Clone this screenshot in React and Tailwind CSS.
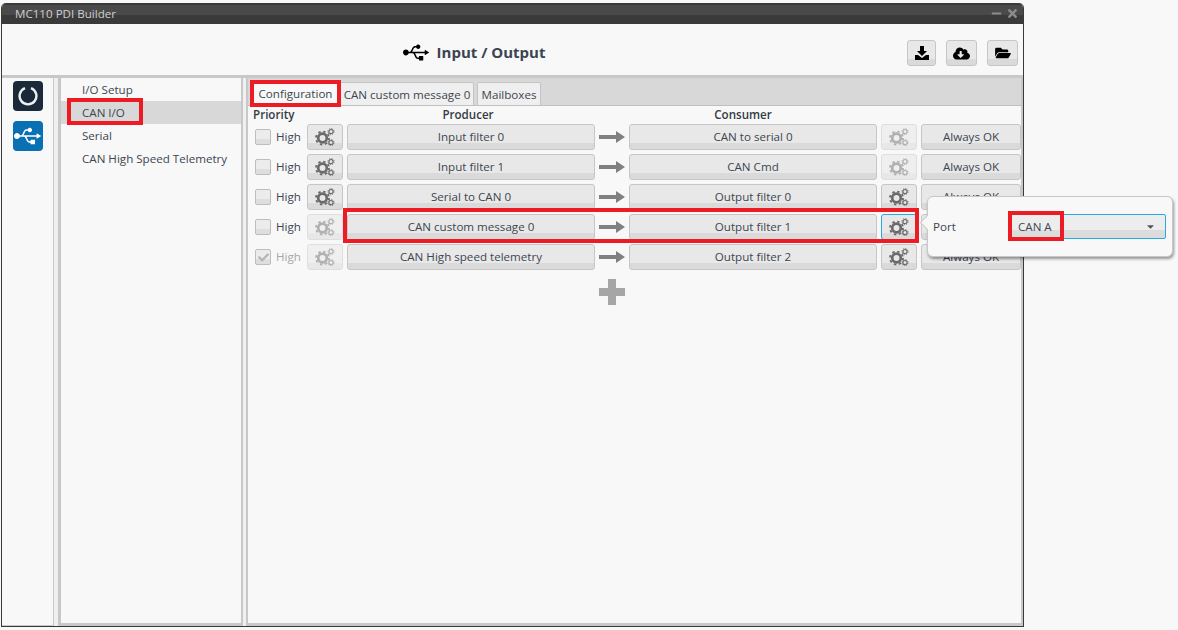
import { FaUsb, FaCloudDownloadAlt, FaFolderOpen, FaTimes, FaMinus, FaCheck, FaCaretDown } from 'react-icons/fa';

const rows = [
  { producer: 'Input filter 0', consumer: 'CAN to serial 0', prodGear: true, consGear: false },
  { producer: 'Input filter 1', consumer: 'CAN Cmd', prodGear: true, consGear: false },
  { producer: 'Serial to CAN 0', consumer: 'Output filter 0', prodGear: true, consGear: true },
  { producer: 'CAN custom message 0', consumer: 'Output filter 1', prodGear: false, consGear: true, focus: true },
  { producer: 'CAN High speed telemetry', consumer: 'Output filter 2', prodGear: false, consGear: true, checked: true },
];

const face = 'flex items-center justify-center h-[26px] rounded-[3px] border bg-[linear-gradient(#e8e8e8_76%,#dadada_76%)] text-[#3c4650]';
const btn = `${face} border-[#c6c6c6]`;

function Gears({ className }) {
  return (
    <svg className={className} viewBox="0 0 20 18" fill="none" stroke="currentColor">
      <circle cx="7.5" cy="10" r="4.3" strokeWidth="2.7" />
      <circle cx="7.5" cy="10" r="6.5" strokeWidth="1.8" strokeDasharray="2.4 2.7" />
      <circle cx="16" cy="3.6" r="2.1" strokeWidth="1.2" />
      <circle cx="16" cy="3.6" r="3.1" strokeWidth="0.9" strokeDasharray="1.2 1.23" />
      <circle cx="16" cy="14.6" r="2.1" strokeWidth="1.2" />
      <circle cx="16" cy="14.6" r="3.1" strokeWidth="0.9" strokeDasharray="1.2 1.23" />
    </svg>
  );
}

function GearButton({ on, focus }) {
  return (
    <div className={`${face} w-[36px] ${focus ? 'border-[#29a9df]' : 'border-[#c6c6c6]'} ${on ? '' : 'opacity-50'}`}>
      <Gears className="w-[20px] h-[18px] text-[#6a6a6a]" />
    </div>
  );
}

function Arrow() {
  return (
    <svg className="w-[26px] h-[12px] mx-[4px] shrink-0" viewBox="0 0 26 12">
      <path d="M0 4h17V0l9 6-9 6V8H0z" fill="#808080" />
    </svg>
  );
}

function Row({ row }) {
  return (
    <div className="flex items-center h-[26px] mb-[4px]">
      <div className="w-[16px] h-[16px] ml-[7px] rounded-[2px] border border-[#bdbdbd] bg-[linear-gradient(#ececec_65%,#dedede_65%)] flex items-center justify-center">
        {row.checked && <FaCheck className="w-[11px] h-[11px] text-[#b4b4b4]" />}
      </div>
      <span className={`w-[31px] ml-[5px] ${row.checked ? 'text-[#a6a6a6]' : 'text-[#3c4650]'}`}>High</span>
      <GearButton on={row.prodGear} />
      <div className={`${btn} w-[248px] ml-[4px]`}>{row.producer}</div>
      <Arrow />
      <div className={`${btn} w-[248px]`}>{row.consumer}</div>
      <div className="w-[4px] shrink-0" />
      <GearButton on={row.consGear} focus={row.focus} />
      <div className={`${btn} w-[100px] ml-[4px]`}>Always OK</div>
    </div>
  );
}

function SideItem({ label, active }) {
  return (
    <div className={`h-[23px] pl-[21px] flex items-center ${active ? 'bg-[#d8d8d8]' : ''}`}>{label}</div>
  );
}

function ToolButton({ children, w }) {
  return <div className={`${face} border-[#c6c6c6] h-[25px] ${w}`}>{children}</div>;
}

export default function App() {
  return (
    <div className="relative w-[1178px] h-[630px] overflow-hidden bg-[#f8f8f8] pt-[3px] pl-[1px] text-[11.6px] text-[#3c4650] font-['Open_Sans',sans-serif]">
      <div className="w-[1023px] h-[624px] flex flex-col rounded-t-[5px] border-x border-b border-[#3a3a3a] overflow-hidden">
        {/* title bar */}
        <div className="h-[21px] shrink-0 flex items-center justify-between pl-[13px] pr-[4px] bg-[linear-gradient(#3a3a3a_0,#3a3a3a_10%,#4a4a4a_10%,#4a4a4a_57%,#3a3a3a_57%)] text-[#cfcfcf]">
          <span>MC110 PDI Builder</span>
          <div className="flex items-center gap-[4px] text-[#8c8c8c]">
            <FaMinus className="w-[11px] h-[11px]" />
            <FaTimes className="w-[13px] h-[13px]" />
          </div>
        </div>

        {/* header */}
        <div className="h-[51px] shrink-0 flex items-center relative">
          <div className="flex-1 flex items-center justify-center gap-[8px] pr-[77px] pt-[6px] text-[#3b4451] text-[15px] font-bold">
            <FaUsb className="w-[26px] h-[21px] text-black" />
            <span>Input / Output</span>
          </div>
          <div className="absolute right-[5px] top-[16px] flex gap-[10px] text-black">
            <ToolButton w="w-[29px]">
              <svg className="w-[14px] h-[14px]" viewBox="0 0 14 14"><path d="M5 0h4v5h3L7 10 2 5h3zM0 9h3l4 3 4-3h3v5H0z" fill="#000" /></svg>
            </ToolButton>
            <ToolButton w="w-[31px]"><FaCloudDownloadAlt className="w-[17px] h-[15px] text-black" /></ToolButton>
            <ToolButton w="w-[31px]"><FaFolderOpen className="w-[16px] h-[14px] text-black" /></ToolButton>
          </div>
        </div>

        {/* body */}
        <div className="flex-1 min-h-0 flex border-t-[3px] border-[#c8c8c8]">
          <div className="w-[52px] shrink-0 border-r border-b border-[#c8c8c8] flex flex-col items-center gap-[10px] pt-[3px]">
            <div className="w-[30px] h-[30px] rounded-[4px] bg-[#1b2a3a] flex items-center justify-center">
              <svg className="w-[20px] h-[20px]" viewBox="0 0 20 20" fill="none">
                <path d="M7 2.15A8.4 8.4 0 1 0 13 2.15" stroke="#f0f0f0" strokeWidth="2.4" />
              </svg>
            </div>
            <div className="w-[30px] h-[30px] rounded-[4px] bg-[#0a70b4] flex items-center justify-center">
              <FaUsb className="w-[27px] h-[22px] text-white" />
            </div>
          </div>
          <div className="w-[4px] shrink-0 bg-[#f0f0f0]" />
          <div className="w-[185px] shrink-0 border-l-[3px] border-r-[2px] border-b-[3px] border-[#c8c8c8]">
            <SideItem label="I/O Setup" />
            <SideItem label="CAN I/O" active />
            <SideItem label="Serial" />
            <SideItem label="CAN High Speed Telemetry" />
          </div>
          <div className="w-[3px] shrink-0 bg-[#f0f0f0]" />
          <div className="flex-1 min-w-0 border-l-[2px] border-r-[2px] border-b-[3px] border-[#c8c8c8]">
            {/* tabs */}
            <div className="h-[28px] bg-[#d8d8d8] border-b border-[#c0c0c0] flex items-end pl-[6px] gap-[3px]">
              <div className="h-[23px] w-[83px] shrink-0 pt-[1px] bg-[#f8f8f8] flex items-center justify-center">Configuration</div>
              <div className="h-[23px] w-[134px] shrink-0 pt-[1px] rounded-t-[2px] bg-[#efefef] border border-b-0 border-[#c4c4c4] flex items-center justify-center">CAN custom message 0</div>
              <div className="h-[23px] w-[64px] shrink-0 pt-[1px] rounded-t-[2px] bg-[#efefef] border border-b-0 border-[#c4c4c4] flex items-center justify-center">Mailboxes</div>
            </div>
            {/* column titles */}
            <div className="flex h-[18px] items-center font-semibold text-[#333b45]">
              <span className="w-[96px] pl-[5px]">Priority</span>
              <span className="w-[248px] text-center">Producer</span>
              <span className="w-[29px]" />
              <span className="w-[244px] text-center">Consumer</span>
            </div>
            {rows.map((r) => <Row key={r.producer} row={r} />)}
            <div className="flex justify-center w-[728px] pt-[5px]">
              <svg className="w-[26px] h-[26px]" viewBox="0 0 26 26"><path d="M9 0h8v9h9v8h-9v9H9v-9H0V9h9z" fill="#a6a6a6" /></svg>
            </div>
          </div>
        </div>
      </div>

      {/* port popup */}
      <div className="absolute left-[927px] top-[196px] w-[246px] h-[61px] bg-[#f8f8f8] rounded-[6px] border border-[#c8c8c8] shadow-[1px_2px_3px_rgba(0,0,0,0.4)] flex items-center pl-[5px]">
        <div className="absolute left-[-6px] top-[20px] w-[11px] h-[11px] rotate-45 bg-[#f8f8f8] border-l border-b border-[#c8c8c8]" />
        <span className="relative w-[75px]">Port</span>
        <div className="relative w-[157px] h-[25px] ml-[1px] rounded-[2px] border border-[#29a9df] bg-[linear-gradient(#ededed_65%,#dcdcdc_65%)] flex items-center justify-between pl-[8px] pr-[9px]">
          <span>CAN A</span>
          <FaCaretDown className="w-[11px] h-[11px] text-[#555555]" />
        </div>
      </div>

      {/* red annotation boxes */}
      <div className="absolute left-[67px] top-[98px] w-[76px] h-[27px] border-[4px] border-[#ed1c24]" />
      <div className="absolute left-[250px] top-[80px] w-[91px] h-[27px] border-[4px] border-[#ed1c24]" />
      <div className="absolute left-[343px] top-[208px] w-[576px] h-[35px] border-[4px] border-[#ed1c24]" />
      <div className="absolute left-[1008px] top-[211px] w-[56px] h-[30px] border-[4px] border-[#ed1c24]" />
    </div>
  );
}
